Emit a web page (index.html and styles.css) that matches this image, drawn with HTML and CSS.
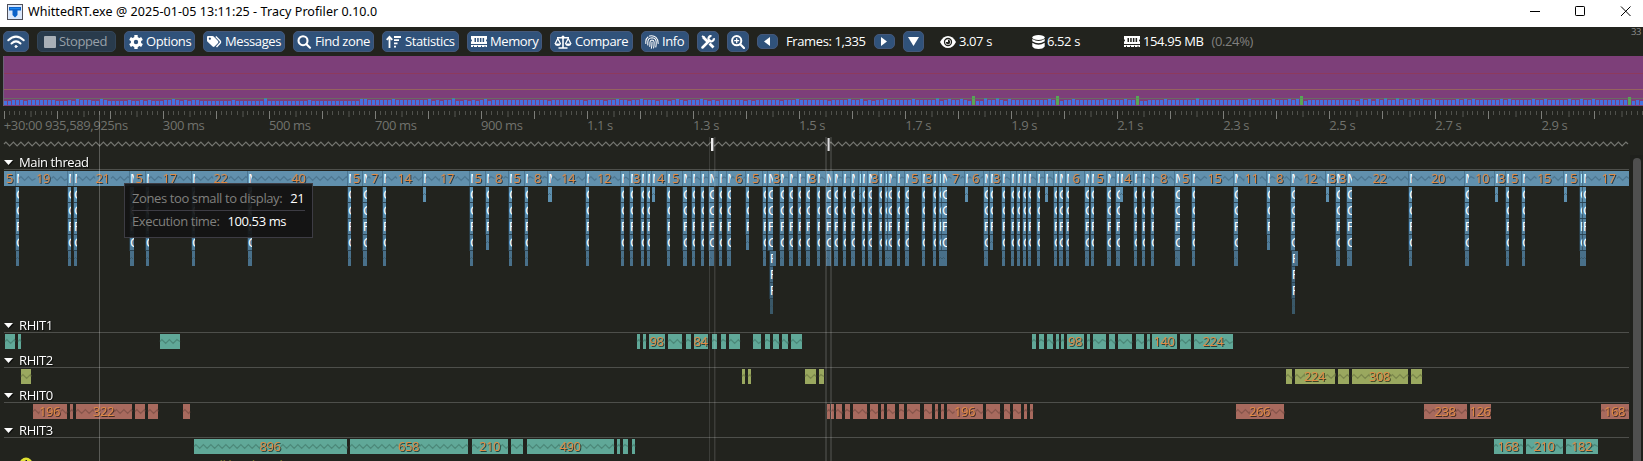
FILE: index.html
```html
<!DOCTYPE html>
<html lang="en">
<head>
<meta charset="utf-8">
<title>Tracy Profiler</title>
<link rel="stylesheet" href="styles.css">
</head>
<body>
<svg class="defs" width="0" height="0">
  <symbol id="ram" viewBox="0 0 16 12">
    <path fill="#fff" fill-rule="evenodd" d="M0 0H16V3.2Q15 3.6 15 4.4T16 5.6V8H0V5.6Q1 5.2 1 4.4T0 3.2ZM3.5 2V6H5V2ZM6.2 2V6H7.7V2ZM8.9 2V6H10.4V2ZM11.6 2V6H13.1V2ZM0 9H16V11H14.5V9.8H13.5V11H11V9.8H10V11H7V9.8H6V11H3V9.8H2V11H0Z"/>
  </symbol>
</svg>
<header class="titlebar">
  <svg class="app-icon" width="16" height="16" viewBox="0 0 16 16">
    <rect x=".5" y=".5" width="15" height="15" fill="#dbe8fb" stroke="#4f4f58"/>
    <path d="M2 3H14V6.500H10.500V11L8 13.500 5.500 11V6.500H2Z" fill="#0b62c9"/>
    <path d="M3 4H13V5H3Z" fill="#1c86f0"/>
  </svg>
  <span class="title">WhittedRT.exe @ 2025-01-05 13:11:25 - Tracy Profiler 0.10.0</span>
  <svg class="winctl" width="103" height="12" viewBox="0 0 103 12" fill="none" stroke="#000">
    <path d="M0 5.500H10"/><rect x="45.500" y=".5" width="9" height="9" rx=".7"/><path d="M91 .5L100.500 10M100.500 .5L91 10"/>
  </svg>
</header>

<nav class="toolbar">
  <button class="btn w-wifi"><svg width="18" height="14" viewBox="0 0 18 14" fill="none" stroke="#fff" stroke-width="2" stroke-linecap="round"><path d="M1.300 5.300Q9 -2 16.700 5.300"/><path d="M4.500 8.500Q9 4.300 13.500 8.500"/><circle cx="9" cy="11.500" r="1" fill="#fff" stroke-width="1"/></svg></button>
  <button class="btn off w-stop"><svg width="12" height="14" viewBox="0 0 12 14"><rect y="1" width="12" height="12" rx="1" fill="#fff"/></svg><span class="g3">Stopped</span></button>
  <button class="btn w-opt"><svg width="14" height="14" viewBox="0 0 14 14"><g fill="#fff"><rect x="5.300" width="3.400" height="14" rx=".6"/><rect x="5.300" width="3.400" height="14" rx=".6" transform="rotate(60 7 7)"/><rect x="5.300" width="3.400" height="14" rx=".6" transform="rotate(120 7 7)"/><circle cx="7" cy="7" r="5.200"/></g><circle cx="7" cy="7" r="2.200" fill="#30527a"/></svg><span class="g3">Options</span></button>
  <button class="btn w-msg"><svg width="15" height="14" viewBox="0 0 15 14"><path fill="#fff" fill-rule="evenodd" d="M0 2Q0 1 1 1H5.500Q6.200 1 6.700 1.500L11 6Q11.800 7 11 8L7.500 11.600Q6.500 12.500 5.600 11.600L.6 6.700Q0 6.200 0 5.500ZM2.800 2.600A1.100 1.100 0 1 0 2.900 2.600Z"/><path d="M8.800 1.500L13.200 6Q14 7 13.200 8L9.500 12" fill="none" stroke="#fff" stroke-width="1.400"/></svg><span class="g3">Messages</span></button>
  <button class="btn w-find"><svg width="15" height="14" viewBox="0 0 15 14" fill="none" stroke="#fff" stroke-width="2.100" stroke-linecap="round"><circle cx="6" cy="5.700" r="4.500"/><path d="M9.500 9.200L13 12.700"/></svg><span class="g3">Find zone</span></button>
  <button class="btn w-stat"><svg width="16" height="14" viewBox="0 0 16 14" fill="none" stroke="#fff" stroke-width="1.800"><path d="M3.500 13V2M.7 4.800L3.500 1.800 6.300 4.800M8 2H15M8 5.200H13M8 8.400H11.500M8 11.600H10"/></svg><span class="g3">Statistics</span></button>
  <button class="btn w-mem"><svg width="16" height="12"><use href="#ram"/></svg><span class="g3">Memory</span></button>
  <button class="btn w-cmp"><svg width="18" height="14" viewBox="0 0 18 14" fill="none" stroke="#fff" stroke-width="1.300"><path d="M9 1V13M3 2.800H15M4.500 13H13.500" stroke-width="1.600"/><path d="M1 9L3.800 3.500 6.600 9M11.400 9L14.200 3.500 17 9"/><path d="M.6 8.500H7Q6.500 11 3.800 11T.6 8.500ZM11 8.500H17.400Q17 11 14.200 11T11 8.500Z" fill="#fff" stroke="none"/><circle cx="9" cy="2" r="1.500" fill="#fff" stroke="none"/></svg><span class="g3">Compare</span></button>
  <button class="btn w-info"><svg width="14" height="14" viewBox="0 0 14 14" fill="none" stroke="#fff" stroke-width="1.050" stroke-linecap="round"><path d="M.8 8.500V6.500Q1 3.500 3 2M4.500 1.100Q8 -.2 11 2.300Q13.200 4.300 13.200 8.500M2.800 10V7Q3 3 7 2.800Q11 3 11.200 7Q11.300 10 10.800 12M4.800 11.500Q5 9 5 7Q5.200 5 7 4.900Q9 5 9.100 7Q9.200 10.500 8.600 13M7 7Q7.100 10.500 6.300 13.300"/></svg><span class="g3">Info</span></button>
  <button class="btn w-sq"><svg width="14" height="14" viewBox="0 0 14 14" fill="none" stroke="#fff"><path d="M2 2L6.500 6.500M8.500 8.500L12.500 12.500" stroke-width="2.800"/><path d="M1 1L3.500 2.500" stroke-width="2"/><path d="M1.500 12.500L8.500 5.500" stroke-width="2.500" stroke-linecap="round"/><path d="M12.800 3.200A2.700 2.700 0 1 1 10.500 1" stroke-width="2.200"/></svg></button>
  <button class="btn w-sq"><svg width="14" height="14" viewBox="0 0 14 14" fill="none" stroke="#fff" stroke-linecap="round"><circle cx="5.700" cy="5.700" r="4.600" stroke-width="2"/><path d="M9.300 9.300L13 13" stroke-width="2.200"/><path d="M3.700 5.700H7.700M5.700 3.700V7.700" stroke-width="1.300"/></svg></button>
  <button class="btn small"><svg width="6" height="9" viewBox="0 0 6 9"><path d="M6 0V9L0 4.500Z" fill="#fff"/></svg></button>
  <span class="stat framecount">Frames: 1,335</span>
  <button class="btn small"><svg width="6" height="9" viewBox="0 0 6 9"><path d="M0 0V9L6 4.500Z" fill="#fff"/></svg></button>
  <button class="btn w-down"><svg width="11" height="9" viewBox="0 0 11 9"><path d="M0 0H11L5.500 9Z" fill="#fff"/></svg></button>
  <span class="stat view"><svg width="16" height="12" viewBox="0 0 16 12"><path d="M0 6Q3 0 8 0T16 6Q13 12 8 12T0 6Z" fill="#fff"/><circle cx="8" cy="6" r="3.500" fill="none" stroke="#22231e" stroke-width="1.300"/><path d="M8 6V3.800A2.200 2.200 0 1 1 5.800 6Z" fill="#22231e"/></svg><span class="g3">3.07 s</span></span>
  <span class="stat span"><svg width="13" height="14" viewBox="0 0 13 14" fill="#fff"><ellipse cx="6.500" cy="2.500" rx="6.200" ry="2.500"/><path d="M.3 4Q6.500 8 12.700 4V6.200Q6.500 10.500 .3 6.200ZM.3 7.800Q6.500 11.700 12.700 7.800V11.500Q11 14 6.500 14T.3 11.500Z"/></svg><span class="g2">6.52 s</span></span>
  <span class="stat ram"><svg width="16" height="12"><use href="#ram"/></svg><span class="g3">154.95 MB</span><span class="dim">(0.24%)</span></span>
  <span class="fps">33</span>
</nav>

<main class="view-area">
  <svg id="frames" class="frames" width="1643" height="50"></svg>
  <svg id="timeline" class="timeline" width="1643" height="355" viewBox="0 106 1643 355"></svg>
  <aside class="tooltip">
    <p><span class="key">Zones too small to display:</span><span class="val">21</span></p>
    <hr>
    <p><span class="key">Execution time:</span><span class="val">100.53 ms</span></p>
  </aside>
</main>
<script src="app.js"></script>
</body>
</html>
```
FILE: styles.css
```css
* { box-sizing: border-box; }
body {
  margin: 0;
  width: 1643px;
  height: 461px;
  overflow: hidden;
  background: #22231e;
  color: #fff;
  font: 13px/15px "Open Sans", "Noto Sans", sans-serif;
  letter-spacing: -.39px;
}
.defs { position: absolute; }
.titlebar {
  display: flex;
  align-items: center;
  height: 27px;
  padding: 0 10px 4px 7px;
  background: #fff;
  color: #000;
}
.title { margin-left: 5px; font: 12.5px/15px "Noto Sans", sans-serif; letter-spacing: .06px; white-space: nowrap; }
.winctl { margin: 1px 0 0 auto; }
.toolbar {
  display: flex;
  align-items: center;
  height: 29px;
  padding: 0 0 0 3px;
}
.btn {
  display: flex;
  align-items: center;
  flex: none;
  height: 21px;
  margin: 0 8px 0 0;
  padding: 0 0 0 3px;
  border: 1px solid #44587a;
  border-radius: 5px;
  background: #30527a;
  color: #fff;
  font: inherit;
  letter-spacing: inherit;
  white-space: nowrap;
}
.btn svg, .stat svg { flex: none; }
.off { background: #293b4c; border-color: #334558; }
.off svg { opacity: .6; }
.off span { color: #98a0a8; }
.g2 { margin-left: 2px; }
.g3 { margin-left: 3px; }
.w-wifi { width: 26px; }
.w-stop { width: 79px; padding-left: 6px; }
.w-opt { width: 71px; padding-left: 4px; }
.w-msg { width: 82px; }
.w-find { width: 81px; }
.w-stat { width: 77px; }
.w-mem { width: 75px; }
.w-cmp { width: 83px; }
.w-info { width: 48px; }
.w-sq { width: 22px; }
.small { width: 21px; height: 15px; padding-left: 6px; }
.w-down { width: 21px; padding-left: 4px; }
.stat { display: flex; align-items: center; flex: none; white-space: nowrap; }
.framecount { width: 88px; }
.view { width: 92px; margin-left: 8px; }
.span { width: 92px; }
.ram { width: 140px; }
.dim { margin-left: 8px; color: #80807e; }
.fps { margin: -20px 2px 0 auto; font-size: 9.5px; line-height: 10px; color: #8c8c8a; }
.view-area { position: relative; }
.frames, .timeline { display: block; }
.timeline text { fill: #fff; }
.timeline .tick { fill: #71726d; }
.timeline .count { fill: #e08a44; text-anchor: middle; }
.timeline .count, .timeline .head { filter: drop-shadow(1px 1px 0 rgba(0, 0, 0, .6)); }
.timeline .olive { fill: #80802f; }
.tooltip {
  position: absolute;
  left: 124px;
  top: 127px;
  width: 189px;
  height: 55px;
  padding: 7px;
  border: 1px solid #3d3c44;
  background: rgba(19, 19, 19, .92);
}
.tooltip p { margin: 0; white-space: nowrap; }
.tooltip hr { width: 173px; height: 1px; margin: 4px 0 3px; border: 0; background: #3d3c44; }
.key { color: #80807e; }
.val { margin-left: 8px; }
```
FILE: app.js
```js
const esc = n => Math.round(n * 100) / 100;
const rect = (x, y, w, h, fill, extra = '') => `<rect x="${x}" y="${y}" width="${w}" height="${h}" fill="${fill}" ${extra}/>`;

/* Frame time strip: one 3px bar per frame */
const tall = new Set([18, 24, 42, 89, 90, 97, 106, 120, 153, 159, 168, 174, 198, 211, 214, 220, 227, 236, 239, 251, 261, 267, 275, 280, 290, 311, 317, 321, 323, 339, 341, 343, 350, 352, 354, 357, 363, 365, 367, 374, 376, 382, 385, 391, 394, 397]);
const peak = new Set([65, 112, 233, 245, 248, 298, 345, 348]);
const slow = { 242: 9, 263: 9, 283: 9, 324: 9, 406: 8 };
const low = new Set([0, 1, 5, 13, 14, 15, 17, 22, 23, 26, 27, 28, 29, 30, 32, 33, 35, 37, 38, 39, 44, 46, 66, 107, 109, 113, 114, 116, 118, 121, 136, 145, 150, 156, 163, 166, 170, 176, 178, 185, 187, 194, 206, 215, 217, 234, 241, 243, 244, 250, 264, 284, 285, 325, 338, 342, 407, 409]);
let bars = rect(4, 0, 1639, 50, '#7d3f79') + rect(3, 0, 1, 50, '#6d6478') +
  rect(4, 17, 1639, 1, '#8d3a5e') + rect(4, 33, 1639, 1, '#95635f');
for (let i = 0; i < 410; i++) {
  let h = 5;
  if (low.has(i) || (i > 48 && i < 89 && i % 19)) h = 4;
  if (tall.has(i)) h = 6;
  if (peak.has(i)) h = 7;
  if (slow[i]) h = slow[i];
  bars += rect(4 + i * 4, 49 - h, 3, h, slow[i] ? '#58a856' : '#4672e0');
  if (peak.has(i)) bars += rect(4 + i * 4, 42, 3, 1, '#2f90b0');
}
bars += rect(4, 42, 1639, 1, '#5b8d55', 'fill-opacity=".55"');
document.getElementById('frames').innerHTML = bars;

/* Timeline */
let out = '', clipId = 0;
const zigzag = (x0, x1, y, color, a = 1.9) => {
  let d = `M${x0} ${y}`, x = x0 + 1.9, s = -1;
  for (; x < x1; x += 3.75, s = -s) d += `L${esc(x)} ${y + s * a}`;
  d += `L${x1} ${y}`;
  return `<path d="${d}" fill="none" stroke="${color}" stroke-width="1.3"/>`;
};
const count = (x, y, t) => `<text class="count" x="${x - .5}" y="${y}">${t}</text>`;

const STEP = 53.02;
const labels = { 0: '+30:00 935,589,925ns', 3: '300 ms', 5: '500 ms', 7: '700 ms', 9: '900 ms' };
for (let i = 11; i < 30; i += 2) labels[i] = (i / 10).toFixed(1) + ' s';
for (let i = 0; i < 310; i++) {
  const x = Math.floor(4 + i * STEP / 10);
  if (x > 1642) break;
  if (i % 10 === 0) out += rect(x, 111, 1, 8, '#7d7e79');
  else if (i % 5 === 0) out += rect(x, 111, 2, 6, '#3c3d38');
  else out += rect(x, 111, 1, 4, '#50514c');
}
for (const i in labels) out += `<text class="tick" x="${esc(3.8 + i * STEP)}" y="130">${labels[i]}</text>`;
out += zigzag(4, 1628, 144, '#73746f');

const heads = [['Main thread', 169], ['RHIT1', 332], ['RHIT2', 367], ['RHIT0', 402], ['RHIT3', 437]];
for (const [name, y] of heads) {
  out += `<path class="head" d="M4 ${y - 9}H13L8.500 ${y - 4}Z" fill="#fff"/><text class="head" x="19" y="${y - 2}">${name}</text>` + rect(4, y, 1625, 1, '#4e4f4b');
}

/* Main thread: [x, width, nesting depth] of each call stack */
const stacks = [
  [16,3],[68,3],[74,3],[130,4],[146,3],[192,3],[248,4],[348,3],[363,4],[383,3],[423,3,1],[470,3],[486,3,4],[509,3],[525,3],[548,4,1],
  [586,3],[621,3],[630,3],[641,3],[647,3],[652,3,1],[667,3],[683,4],[692,3],[701,3],[709,5],[719,3],[727,4],[746,3,4],[763,3],[768,5,8],
  [780,4],[789,4],[798,3],[806,4],[817,3],[826,5],[834,4],[843,3],[851,4],[859,3,1],[862,3],[868,4],[879,3],[885,3],[888,4],[897,3],
  [905,4],[922,3],[933,3],[939,3],[942,5],[965,3,1],[984,4],[990,3,4],[1002,3],[1011,3],[1017,3],[1023,3],[1028,3],[1037,3],[1045,3,1],
  [1054,3],[1059,4],[1066,3],[1085,4],[1091,3],[1107,4],[1116,4],[1120,3,1],[1134,3],[1142,3],[1151,3],[1175,5],[1192,3],[1234,4],
  [1267,3,4],[1291,4,8],[1326,3,1],[1336,4],[1347,5],[1409,3],[1465,4],[1495,3,1],[1506,3],[1522,3],[1564,3,1],[1580,3],[1583,3]];
const counts = [[10,5],[43.5,19],[103,21],[139.5,5],[170,17],[221,22],[299,40],[357,5],[375,7],[405,14],[447.5,17],[478.5,5],[499,8],[517.5,5],
  [538,8],[568.5,14],[604.5,12],[637,3],[661,4],[676,5],[739,6],[756,5],[777,3],[813,3],[875,3],[915,5],[929,3],[956,7],[976,6],[997,3],
  [1076.5,6],[1100.5,5],[1128,4],[1164,8],[1186,5],[1215,15],[1252,11],[1280,8],[1310.5,12],[1333,3],[1343,3],[1380,22],[1438.5,20],
  [1482.5,10],[1502,3],[1515,5],[1544.5,15],[1574,5],[1609,17]];
const shades = ['#6190ad', '#5d8fae', '#5888a8', '#5482a0', '#507b98', '#49708a', '#446880', '#406278', '#3a5868'];
out += rect(4, 171, 1625, 15, shades[0]);
for (let i = 0; i <= stacks.length; i++) {
  const a = i ? stacks[i - 1][0] + stacks[i - 1][1] : 4;
  const b = i < stacks.length ? stacks[i][0] : 1629;
  if (b - a < 5) continue;
  const c = counts.find(q => q[0] > a && q[0] < b);
  if (!c) { out += zigzag(a, b, 178.5, '#4e7791', 1.5); continue; }
  const half = String(c[1]).length * 3.5 + 1;
  if (c[0] - half - a > 3) out += zigzag(a, c[0] - half, 178.5, '#4e7791') + zigzag(c[0] + half, b, 178.5, '#4e7791');
}
for (const [x, w, depth = 5] of stacks) {
  const id = 'k' + clipId++;
  const deep = x < 1000 ? 2 : 1;
  out += `<clipPath id="${id}"><rect x="${x}" y="171" width="${w}" height="150"/></clipPath>`;
  let letters = `<text x="${x - .1}" y="183">M</text>`;
  for (let r = 1; r <= depth; r++) {
    const y = 171 + r * 16, last = r === depth;
    const inner = depth === 8 && r > 4;
    const rx = inner ? x + deep : x, rw = inner ? 3 : w;
    out += rect(rx, y, rw, 15, shades[r]);
    if (last) out += `<path d="M${rx} ${y + 8}l1.500 -1.500 1.500 1.500" fill="none" stroke="#33505f" stroke-opacity=".6"/>`;
    else {
      out += rect(rx, y + 15, rw, 1, '#2b4556') + rect(rx - 1, y, 1, 16, '#2b4453', 'fill-opacity=".7"');
      letters += `<text x="${rx - (r > 4 || r === 3 ? .3 : 0)}" y="${y + 12}">${r < 3 || r === 4 ? 'C' : 'F'}</text>`;
    }
  }
  if (depth === 8) out += rect(x + 3 + deep, 251, 3, 15, shades[5]);
  out += rect(x - 1, 171, 1, 15, '#4b7690') + `<g clip-path="url(#${id})">${letters}</g>`;
}
for (const [x, t] of counts) out += count(x, 183, t);

/* Worker threads: [x, width, zone count] */
const tracks = [
  [334, '#60a898', '#4c8879', [[5,10],[18,3],[160,20],[637,3],[643,3],[649,16,98],[668,14],[686,5],[694,14,84],[712,5],[721,5],[729,11],[753,8],[765,5],[773,6],[782,6],[791,11],
    [1032,4],[1039,5],[1047,6],[1056,3],[1061,3],[1067,17,98],[1087,3],[1093,13],[1109,6],[1118,14],[1136,8],[1147,3],[1152,25,140],[1180,11],[1194,39,224]]],
  [369, '#9aa85f', '#7b874c', [[21,10],[742,3],[748,3],[805,11],[819,5],[1286,6],[1295,40,224],[1338,11],[1352,56,308],[1411,11]]],
  [404, '#a86a5e', '#87564c', [[33,34,196],[70,3],[76,56,322],[135,10],[148,10],[183,7],[827,3],[831,3],[836,6],[845,5],[853,14],[870,8],[881,3],[887,8],[899,5],[907,13],[924,8],
    [935,3],[941,3],[947,36,196],[986,14],[1004,6],[1013,8],[1024,3],[1030,3],[1236,48,266],[1424,43,238],[1470,21,126],[1601,28,168]]],
  [439, '#60a898', '#4c8879', [[194,153,896],[350,118,658],[472,36,210],[511,12],[527,87,490],[617,3],[623,5],[632,3],[1494,29,168],[1526,37,210],[1566,32,182]]]];
for (const [y, fill, dark, zones] of tracks) {
  for (const [x, w, n] of zones) {
    out += rect(x, y, w, 15, fill);
    if (!n) { out += zigzag(x, x + w, y + 7.5, dark); continue; }
    const c = x + w / 2, half = String(n).length * 3.5;
    if (w / 2 - half > 2) out += zigzag(x, c - half, y + 7.5, dark) + zigzag(c + half, x + w, y + 7.5, dark);
    out += count(c, y + 12, n);
  }
}

/* Frame boundaries and the cursor line */
for (const [x, w] of [[709, 1], [714, 1.5], [825, 2], [830, 2]]) out += rect(x, 137, w, 324, '#fff', 'fill-opacity=".12"');
out += rect(711, 138, 2, 13, '#eee') + rect(713, 138, 1, 13, '#777') + rect(827, 138, 1, 13, '#777') + rect(828, 138, 1, 13, '#ddd') + rect(829, 138, 1, 13, '#999');
out += rect(99, 111, 1, 350, '#fff', 'fill-opacity=".25"');

out += '<circle cx="26" cy="464" r="6.500" fill="#e0e030"/><rect x="25.500" y="460" width="1.500" height="1" fill="#22231e"/>';
out += '<text class="olive" x="207" y="470">will be closed</text>';
out += rect(1630, 155, 13, 306, '#1f201c') + rect(1633, 158, 8, 320, '#4f4f4f', 'rx="4"');
document.getElementById('timeline').innerHTML = out;
```
